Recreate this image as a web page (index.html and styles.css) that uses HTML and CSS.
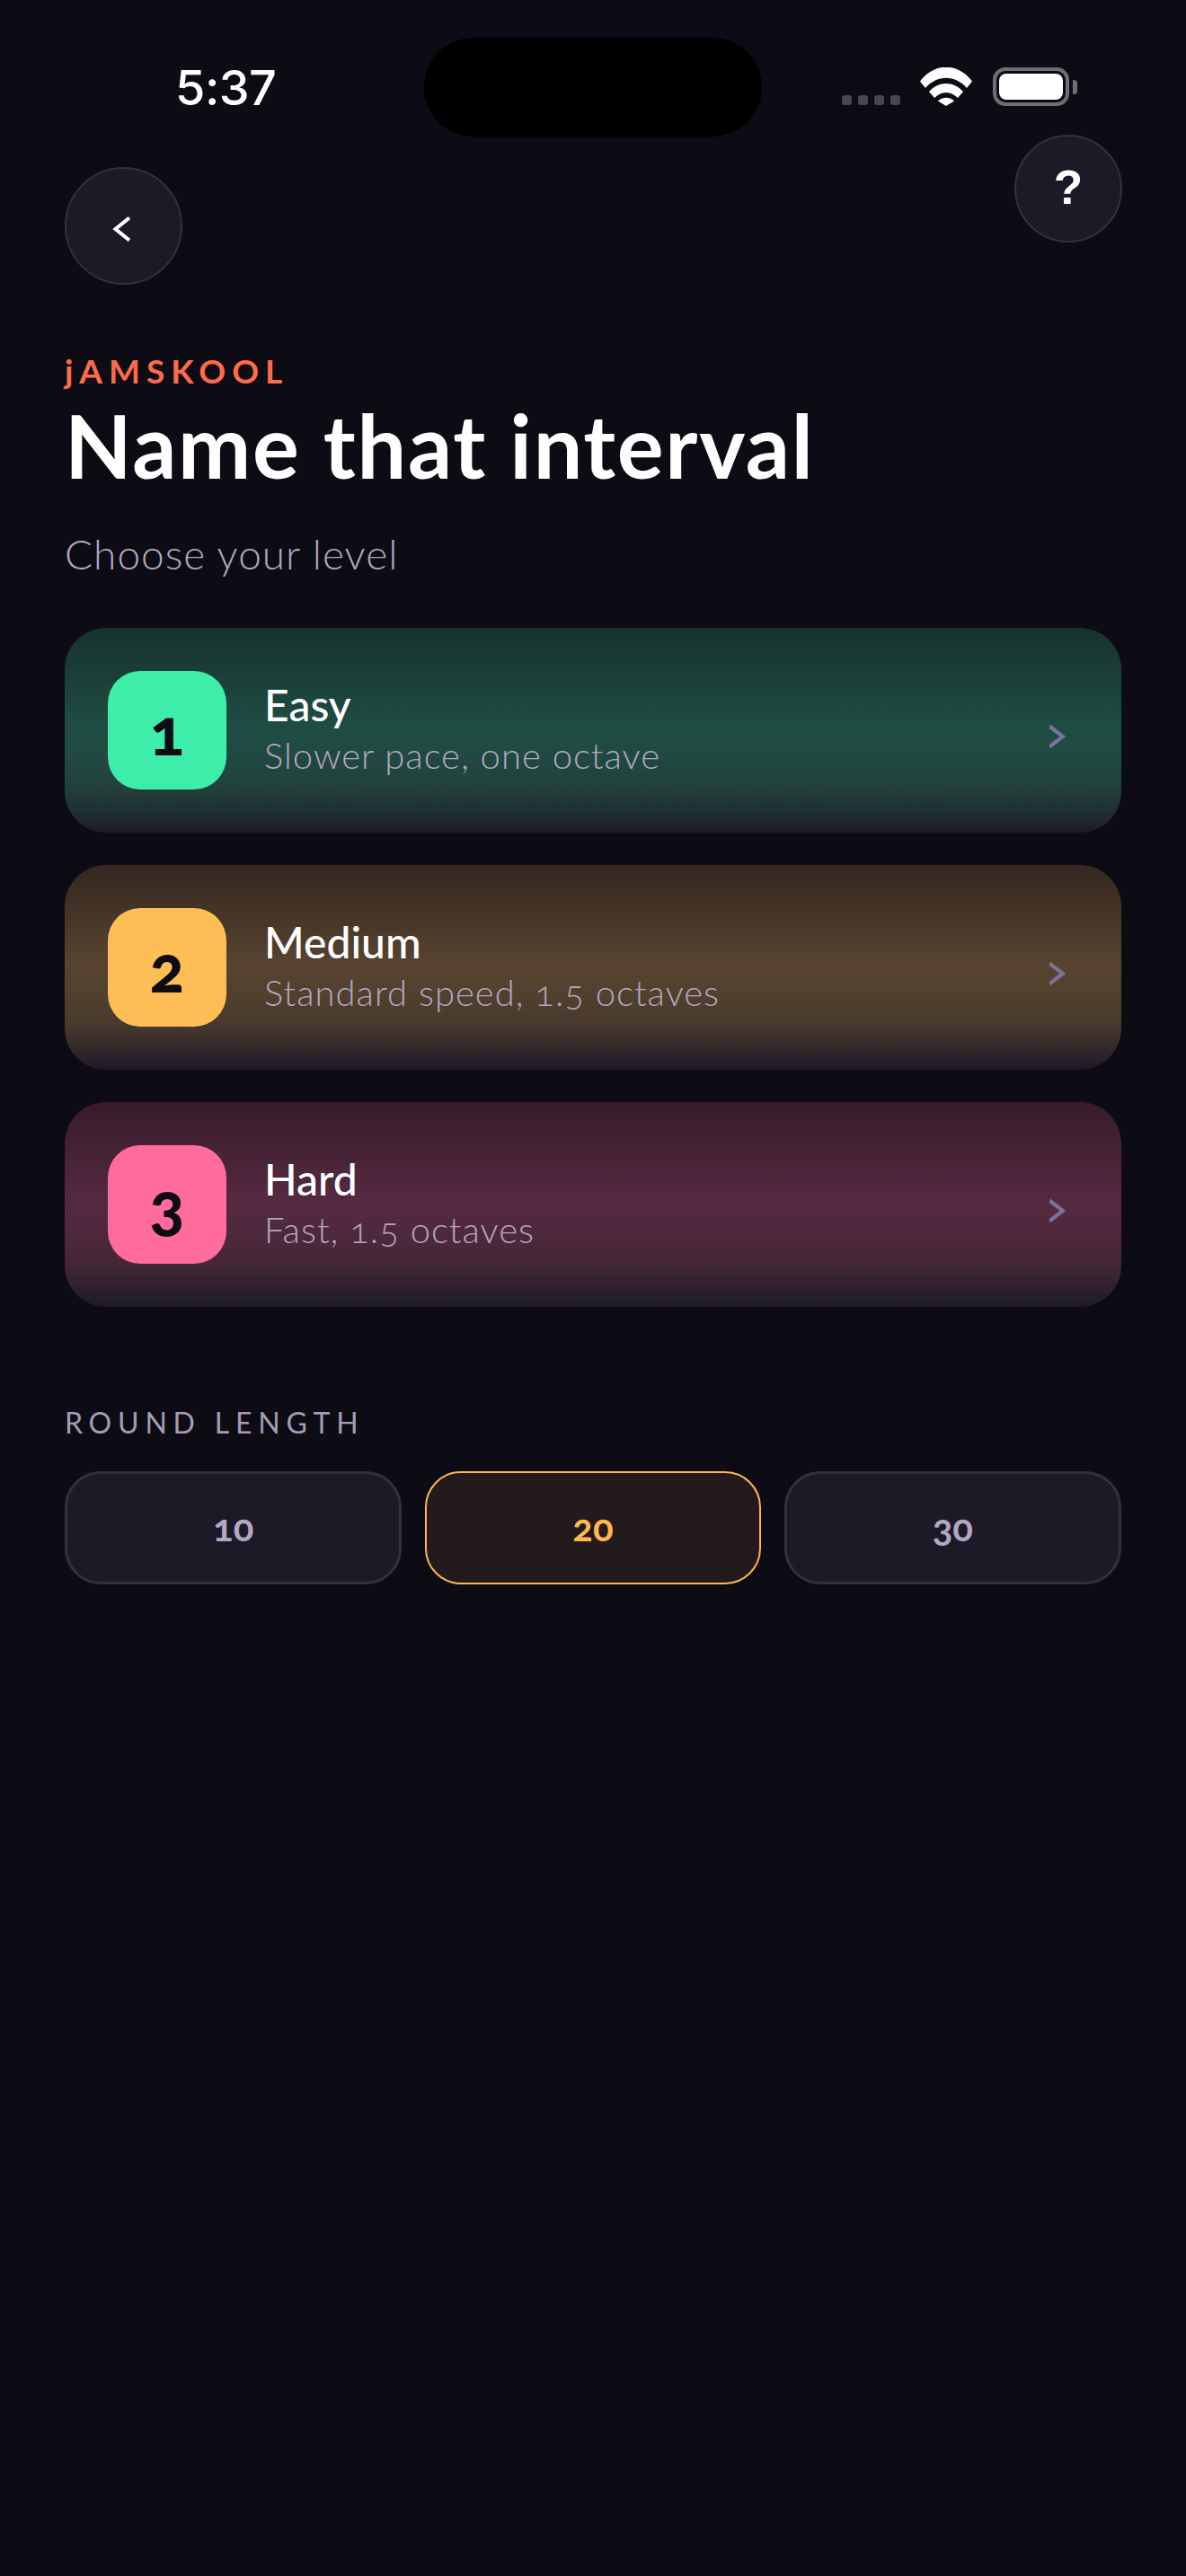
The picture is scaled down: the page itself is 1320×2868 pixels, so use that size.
FILE: index.html
```html
<!DOCTYPE html>
<html lang="en">
<head>
<meta charset="utf-8">
<title>Name that interval</title>
<link rel="stylesheet" href="styles.css">
</head>
<body>
<div class="screen">
  <div class="status">
    <span class="time">5:37</span>
    <div class="island"></div>
    <div class="dots"><i></i><i></i><i></i><i></i></div>
    <svg class="wifi" viewBox="0 0 58 44" width="58" height="44"><path d="M0 16.500C16-4.500 42-4.500 58 16.500L52 24C39 9 19 9 6 24Z M10 28C21 16 37 16 48 28L42 35C34 27 24 27 16 35Z M20 38.500C25 33.500 33 33.500 38 38.500L29 44Z" transform="translate(0 -1)" fill="#fff"/></svg>
    <div class="battery"><div class="battery-fill"></div></div>
  </div>
  <div class="nav">
    <button class="round back"><svg viewBox="0 0 20 28" width="20" height="28"><path d="M19 1.500L3.500 14L19 26.500" fill="none" stroke="#fff" stroke-width="4"/></svg></button>
    <button class="round help">?</button>
  </div>
  <div class="brand">jAMSKOOL</div>
  <h1 class="title">Name that interval</h1>
  <p class="subtitle">Choose your level</p>
  <div class="levels">
    <div class="card green">
      <div class="tile">1</div>
      <div class="info"><div class="name">Easy</div><div class="desc">Slower pace, one octave</div></div>
      <svg class="chev" viewBox="0 0 18 26" width="18" height="26"><path d="M0 1.500L15 13L0 24.500" fill="none" stroke="#7d7299" stroke-width="4.200"/></svg>
    </div>
    <div class="card amber">
      <div class="tile">2</div>
      <div class="info"><div class="name">Medium</div><div class="desc">Standard speed, 1.5 octaves</div></div>
      <svg class="chev" viewBox="0 0 18 26" width="18" height="26"><path d="M0 1.500L15 13L0 24.500" fill="none" stroke="#7d7299" stroke-width="4.200"/></svg>
    </div>
    <div class="card pink">
      <div class="tile">3</div>
      <div class="info"><div class="name">Hard</div><div class="desc">Fast, 1.5 octaves</div></div>
      <svg class="chev" viewBox="0 0 18 26" width="18" height="26"><path d="M0 1.500L15 13L0 24.500" fill="none" stroke="#7d7299" stroke-width="4.200"/></svg>
    </div>
  </div>
  <div class="section-label">ROUND LENGTH</div>
  <div class="chips">
    <div class="chip">10</div>
    <div class="chip on">20</div>
    <div class="chip">30</div>
  </div>
</div>
</body>
</html>
```
FILE: styles.css
```css
* { box-sizing: border-box; }
html, body { margin: 0; padding: 0; }
body { background: #0d0b14; width: 1320px; height: 2868px; overflow: hidden; font-family: "Lato", "Liberation Sans", sans-serif; color: #fff; }
.screen { position: relative; padding: 0 72px; }
.status { height: 150px; position: relative; margin: 0 -72px; }
.time { position: absolute; left: 195px; top: 68px; font: 500 54px/60px "Inter", sans-serif; letter-spacing: -0.5px; }
.island { position: absolute; left: 472px; top: 42px; width: 376px; height: 110px; border-radius: 55px; background: #000; }
.dots { position: absolute; left: 937px; top: 106px; display: flex; gap: 7px; }
.dots i { width: 11px; height: 11px; border-radius: 3px; background: #48474f; }
.wifi { position: absolute; left: 1024px; top: 75px; }
.battery { position: absolute; left: 1105px; top: 75px; width: 85px; height: 43px; border: 4px solid #6f6e75; border-radius: 14px; padding: 3px; }
.battery::after { content: ""; position: absolute; left: 85px; top: 10px; width: 5px; height: 16px; background: #6f6e75; border-radius: 0 4px 4px 0; }
.battery-fill { height: 100%; background: #fff; border-radius: 8px; }
.nav { height: 167px; display: flex; justify-content: space-between; align-items: flex-start; }
.round { background: #1c1a26; border: 2px solid #34313f; border-radius: 50%; color: #fff; padding: 0; display: flex; align-items: center; justify-content: center; }
.back { width: 131px; height: 131px; margin-top: 36px; }
.back svg { margin: 7px 6px 0 0; }
.help { width: 120px; height: 120px; font: 700 53px/1 "Liberation Sans", sans-serif; margin-right: -1px; padding-bottom: 4px; }
.brand { margin-top: 74px; font-weight: 700; font-size: 37px; line-height: 44px; letter-spacing: 7px; color: #ff6b4a; }
.title { margin: 6px 0 0; font-weight: 700; font-size: 97px; line-height: 110px; letter-spacing: 1.700px; }
.subtitle { margin: 38px 0 0; font-weight: 300; font-size: 46px; line-height: 56px; letter-spacing: 1px; color: #b3a7c1; }
.levels { margin-top: 54px; display: flex; flex-direction: column; gap: 36px; }
.card { height: 228px; border-radius: 46px; display: flex; align-items: center; padding: 0 62px 0 48px; }
.green { background: linear-gradient(180deg, #17322c 0%, #1f4d43 48%, #204a41 62%, #22403c 78%, #1f2a2f 93%, #1c1a28 100%); }
.amber { background: linear-gradient(180deg, #35271f 0%, #574330 48%, #52412e 62%, #47392d 78%, #2c2429 93%, #1c1a28 100%); }
.pink { background: linear-gradient(180deg, #371b2b 0%, #552a40 48%, #50293e 62%, #452635 78%, #2c1f2e 93%, #1c1a28 100%); }
.tile { width: 132px; height: 132px; border-radius: 36px; display: flex; align-items: center; justify-content: center; color: #0d0b14; font-weight: 900; font-size: 72px; font-variant-numeric: oldstyle-nums; }
.green .tile { background: #3eedaa; }
.amber .tile { background: #ffbe55; }
.pink .tile { background: #ff6b9d; }
.info { margin-left: 42px; flex: 1; }
.name { font-weight: 500; font-size: 48px; line-height: 54px; margin-top: -2px; }
.desc { margin-top: 4px; font-weight: 300; font-size: 40px; line-height: 50px; letter-spacing: 1px; color: #b3a7c1; font-variant-numeric: oldstyle-nums; }
.chev { margin-top: 14px; }
.section-label { margin-top: 109px; font-size: 32px; line-height: 40px; letter-spacing: 6.800px; color: #a79bb5; }
.chips { margin-top: 34px; display: flex; gap: 26px; }
.chip { flex: 1; height: 126px; border-radius: 40px; background: #1c1a26; border: 3px solid #34313f; display: flex; align-items: center; justify-content: center; font-weight: 700; font-size: 42px; color: #b3a8c4; font-variant-numeric: oldstyle-nums; padding-bottom: 2px; }
.chip.on { background: #231a1d; border: 2px solid #ffb84d; color: #ffb84d; }
```
